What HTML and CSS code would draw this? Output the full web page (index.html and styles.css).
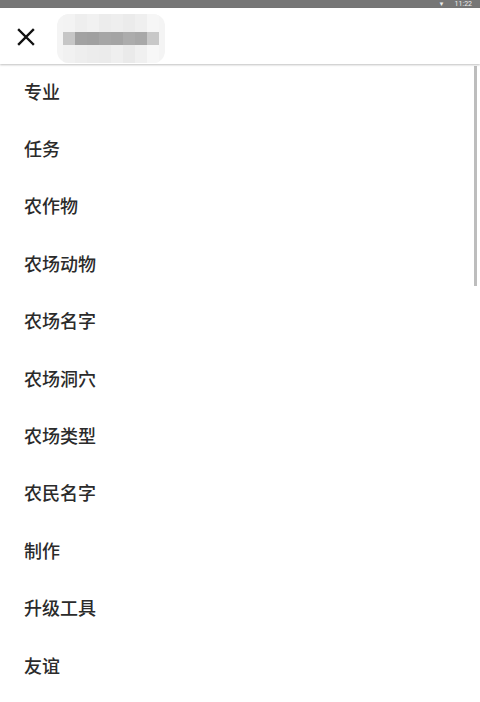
FILE: index.html
```html
<!DOCTYPE html>
<html lang="zh">
<head>
<meta charset="utf-8">
<title>分类</title>
<link rel="stylesheet" href="styles.css">
</head>
<body>
<div class="status">
  <span class="st-icon">▼</span>
  <span class="st-time">11:22</span>
</div>
<header class="bar">
  <button class="close" aria-label="关闭">
    <svg viewBox="0 0 24 24" width="24" height="24"><path d="M5 5 L19 19 M19 5 L5 19" stroke="#111" stroke-width="2.4" stroke-linecap="square" fill="none"/></svg>
  </button>
  <div class="blur">
    <div class="px-row light">
      <i style="background:#f3f3f3"></i><i style="background:#eeeeee"></i><i style="background:#f1f1f1"></i><i style="background:#ececec"></i><i style="background:#eeeeee"></i><i style="background:#ebebeb"></i><i style="background:#efefef"></i><i style="background:#f6f6f6"></i>
    </div>
    <div class="px-row mid">
      <i style="background:#c6c6c6"></i><i style="background:#a2a2a2"></i><i style="background:#a0a0a0"></i><i style="background:#a6a6a6"></i><i style="background:#a4a4a4"></i><i style="background:#acacac"></i><i style="background:#a8a8a8"></i><i style="background:#c8c8c8"></i>
    </div>
    <div class="px-row light">
      <i style="background:#f1f1f1"></i><i style="background:#eeeeee"></i><i style="background:#ececec"></i><i style="background:#ebebeb"></i><i style="background:#efefef"></i><i style="background:#eaeaea"></i><i style="background:#f0f0f0"></i><i style="background:#f7f7f7"></i>
    </div>
  </div>
</header>
<main class="list">
  <div class="item">专业</div>
  <div class="item">任务</div>
  <div class="item">农作物</div>
  <div class="item">农场动物</div>
  <div class="item">农场名字</div>
  <div class="item">农场洞穴</div>
  <div class="item">农场类型</div>
  <div class="item">农民名字</div>
  <div class="item">制作</div>
  <div class="item">升级工具</div>
  <div class="item">友谊</div>
  <div class="scrollbar"></div>
</main>
</body>
</html>
```

FILE: styles.css
```css
* { box-sizing: border-box; }
html, body {
  margin: 0;
  padding: 0;
  background: #ffffff;
  width: 480px;
  height: 702px;
  overflow: hidden;
  font-family: "Noto Sans CJK SC", "Noto Sans", "Liberation Sans", sans-serif;
}
.status {
  height: 8px;
  background: #767676;
  display: flex;
  justify-content: flex-end;
  align-items: center;
  gap: 10px;
  padding-right: 8px;
  color: #eeeeee;
  font-family: "Roboto", "Liberation Sans", sans-serif;
  font-size: 7px;
  line-height: 8px;
}
.st-icon { font-size: 6px; }
.bar {
  height: 56px;
  background: #ffffff;
  display: flex;
  align-items: center;
  padding-left: 14px;
  box-shadow: 0 1px 2px rgba(0,0,0,0.25);
  position: relative;
  z-index: 2;
}
.close {
  width: 24px;
  height: 24px;
  padding: 0;
  border: 0;
  background: none;
  display: flex;
  margin-top: 2px;
}
.blur {
  margin-left: 19px;
  margin-top: 4px;
  height: 49px;
  width: 108px;
  border-radius: 12px;
  background: #f4f4f4;
  padding: 0 6px;
  display: flex;
  flex-direction: column;
  overflow: hidden;
}
.px-row { display: flex; }
.px-row.light { height: 18px; }
.px-row.mid { height: 13px; }
.px-row i { flex: 1; }
.list {
  position: relative;
  height: 638px;
}
.item {
  height: 57.4px;
  display: flex;
  align-items: center;
  padding-left: 24px;
  padding-bottom: 4px;
  font-size: 18px;
  font-weight: 500;
  color: #2b2b2b;
}
.scrollbar {
  position: absolute;
  right: 3px;
  top: 2px;
  width: 3px;
  height: 220px;
  background: #bdbdbd;
}
```
